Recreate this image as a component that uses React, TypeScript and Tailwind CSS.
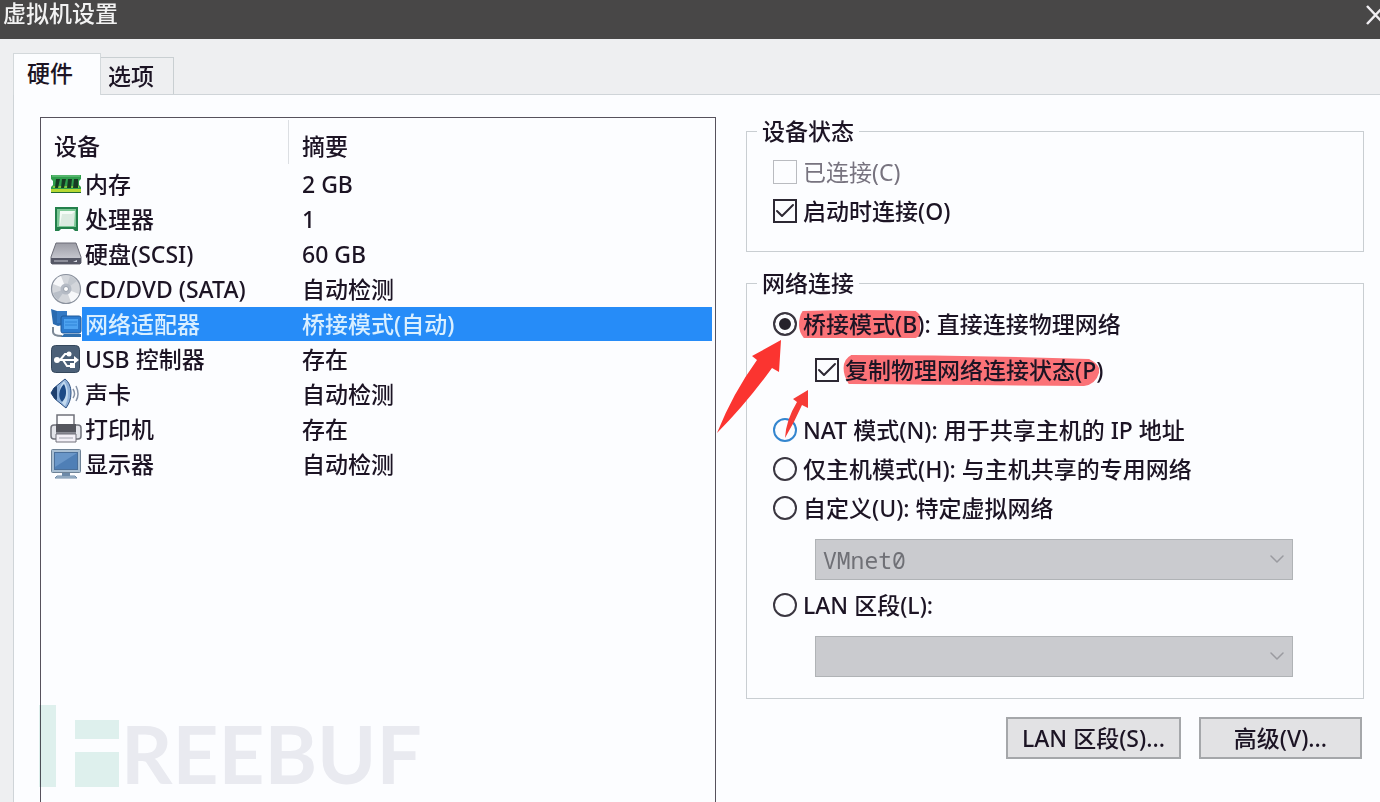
import { PropsWithChildren, ReactNode } from 'react';
import { Check, ChevronDown } from 'lucide-react';

const MemoryIcon = () => (
  <svg viewBox="0 0 32 32" className="size-8 shrink-0">
    <path d="M1 7h30v4l-2 2v4l2 2v6H1v-6l2-2v-4l-2-2z" fill="#2f9e4c" />
    <path d="M2 7h28v2H2z" fill="#55b56c" />
    <path d="M3 18h26v2H3z" fill="#7cc93f" />
    <path d="M1 21h30v3H1z" fill="#b5d832" />
    <path d="M6 11h4l-2 9H5zM12 11h4l-2 9h-3zM18 11h4l-1 9h-4zM24 11h4v9h-5z" fill="#173a22" />
    <path d="M1 24h30v1H1z" fill="#1f6a31" />
  </svg>
);

const CpuIcon = () => (
  <svg viewBox="0 0 32 32" className="size-8 shrink-0">
    <path d="M5 4h23v24h-3l-2-2H11l-2 2H5z" fill="#23804b" />
    <path d="M7 6h19v18H7z" fill="#7cc796" />
    <path d="M10 8h15l-1 15H9z" fill="#dcebe1" />
    <path d="M10 8h15l-3 3H12l-2 11z" fill="#f4fbf6" />
  </svg>
);

const DiskIcon = () => (
  <svg viewBox="0 0 32 32" className="size-8 shrink-0">
    <defs>
      <linearGradient id="disk" x1="0" y1="0" x2="0" y2="1">
        <stop offset="0" stopColor="#9b9ca5" />
        <stop offset="1" stopColor="#d5d6dd" />
      </linearGradient>
    </defs>
    <path d="M6 5h20l5 14v6l-1 1H2l-1-1v-6z" fill="url(#disk)" stroke="#6c6d78" />
    <path d="M1 20h30v5l-1 1H2l-1-1z" fill="#555765" />
    <path d="M4 23h14" stroke="#9fa1ad" strokeWidth="1.5" />
    <path d="M23 24l4-2v2z" fill="#d9dbe5" />
  </svg>
);

const DiscIcon = () => (
  <svg viewBox="0 0 32 32" className="size-8 shrink-0">
    <circle cx="16" cy="16" r="14.5" fill="#d3d6db" stroke="#8b929e" strokeWidth="1.2" />
    <path d="M16 16L3 11a14 14 0 0 1 8-8z" fill="#f7f8fa" />
    <path d="M16 16L29 21a14 14 0 0 1-8 8z" fill="#f7f8fa" />
    <path d="M16 16L8 27a14 14 0 0 1-5-7z" fill="#b9bfc8" />
    <path d="M16 16L20 3a14 14 0 0 1 7 5z" fill="#c3c8cf" />
    <circle cx="16" cy="16" r="5.5" fill="#b4bac4" />
    <circle cx="16" cy="16" r="2.5" fill="#fff" stroke="#98a0ac" />
  </svg>
);

const NetworkIcon = () => (
  <svg viewBox="0 0 32 32" className="size-8 shrink-0">
    <path d="M1 1l6 2h10v13l-9 2-5-2z" fill="#2a6ab0" />
    <path d="M7 3h10v12H7z" fill="#3479c4" />
    <path d="M3 19v5c0 3 3 4 9 4" fill="none" stroke="#7c8896" strokeWidth="2" />
    <rect x="11" y="8" width="20" height="17" rx="2" fill="#2c7bcf" stroke="#1f5a9c" />
    <rect x="14" y="11" width="14" height="10" fill="#4ea3f0" />
    <path d="M15 14h12M15 17h12" stroke="#2f84d8" />
    <path d="M14 26h17v3H11z" fill="#2f6fae" />
  </svg>
);

const UsbIcon = () => (
  <svg viewBox="0 0 32 32" className="size-8 shrink-0">
    <rect x="1.5" y="2.5" width="28" height="27" rx="4" fill="#4b6078" stroke="#34475c" />
    <g stroke="#fff" strokeWidth="2" fill="none">
      <path d="M7 17h18" />
      <path d="M10 17l5-6h4" />
      <path d="M13 17l4 6h4" />
    </g>
    <circle cx="7" cy="17" r="3" fill="#fff" />
    <circle cx="19" cy="11" r="2.5" fill="#fff" />
    <path d="M20 20h5v5h-5zM24 13l5 4-5 4z" fill="#fff" />
  </svg>
);

const SoundIcon = () => (
  <svg viewBox="0 0 32 32" className="size-8 shrink-0">
    <path d="M1 15l3-5L15 1c4 3 6 8 6 14s-2 11-5 15L5 21z" fill="#8fb0d8" stroke="#2b4f80" />
    <path d="M1 15l3-5 3-2v14l-3-2z" fill="#1f3f6d" />
    <path d="M14 3c5 7 5 17 1 25-6-4-8-18-1-25z" fill="#c3daf0" />
    <path d="M14 6c3 6 3 13-2 18-4-4-4-12 2-18z" fill="#1d4a86" />
    <path d="M23 11q3 5 0 9" fill="none" stroke="#8592a6" strokeWidth="1.5" />
    <path d="M26 8q4 8 0 15" fill="none" stroke="#8592a6" strokeWidth="1.5" />
  </svg>
);

const PrinterIcon = () => (
  <svg viewBox="0 0 32 32" className="size-8 shrink-0">
    <path d="M7 2h17v11H7z" fill="#fdfdff" stroke="#70717b" strokeWidth="1.5" />
    <rect x="1" y="12" width="30" height="14" rx="3" fill="#e3e4ea" stroke="#70717b" strokeWidth="1.5" />
    <path d="M6 11h20v8H6z" fill="#55565e" />
    <path d="M6 19h20v2H6z" fill="#8b8c95" />
    <path d="M6 21h20v8H6z" fill="#f3f0f7" stroke="#70717b" />
    <path d="M9 25h14" stroke="#a4a5b0" />
  </svg>
);

const DisplayIcon = () => (
  <svg viewBox="0 0 32 32" className="size-8 shrink-0">
    <rect x="1.5" y="1.5" width="29" height="23" rx="1" fill="#a9bfd3" stroke="#6d8296" />
    <rect x="4.5" y="4.5" width="23" height="17" fill="#4f7fb6" stroke="#4a6f9a" />
    <path d="M5 5h22L5 19z" fill="#6996c8" />
    <path d="M12 25h8v3h-8z" fill="#6d8aa8" />
    <path d="M7 28h18l2 2H5z" fill="#b4c6d6" stroke="#6d8aa8" />
  </svg>
);

interface Device {
  name: string;
  summary: string;
  icon: ReactNode;
  selected?: boolean;
}

const devices: Device[] = [
  { name: '内存', summary: '2 GB', icon: <MemoryIcon /> },
  { name: '处理器', summary: '1', icon: <CpuIcon /> },
  { name: '硬盘(SCSI)', summary: '60 GB', icon: <DiskIcon /> },
  { name: 'CD/DVD (SATA)', summary: '自动检测', icon: <DiscIcon /> },
  { name: '网络适配器', summary: '桥接模式(自动)', icon: <NetworkIcon />, selected: true },
  { name: 'USB 控制器', summary: '存在', icon: <UsbIcon /> },
  { name: '声卡', summary: '自动检测', icon: <SoundIcon /> },
  { name: '打印机', summary: '存在', icon: <PrinterIcon /> },
  { name: '显示器', summary: '自动检测', icon: <DisplayIcon /> },
];

interface ChoiceProps extends PropsWithChildren {
  className?: string;
  checked?: boolean;
  disabled?: boolean;
}

const CheckOption = ({ className = 'h-[39px]', checked, disabled, children }: ChoiceProps) => (
  <label className={`flex items-center gap-1.5 ${disabled ? 'font-normal text-[#77737f]' : ''} ${className}`}>
    <span className="grid size-6 shrink-0 place-items-center">
      <input
        type="checkbox"
        defaultChecked={checked}
        disabled={disabled}
        className="peer col-start-1 row-start-1 size-6 appearance-none border-2 border-[#2c2833] disabled:border disabled:border-[#b9bbc0]"
      />
      <Check
        strokeWidth={2}
        className="pointer-events-none invisible col-start-1 row-start-1 size-6 text-[#2c2833] peer-checked:visible"
      />
    </span>
    <span>{children}</span>
  </label>
);

const RadioOption = ({
  className = 'h-[39px]',
  ring = 'border-[#3a3640]',
  checked,
  children,
}: ChoiceProps & { ring?: string }) => (
  <label className={`flex items-center gap-1.5 ${className}`}>
    <input
      type="radio"
      name="network"
      defaultChecked={checked}
      className={`size-6 shrink-0 appearance-none rounded-full border-2 ${ring} checked:bg-[#26222b] checked:shadow-[inset_0_0_0_4px_#fcfdff]`}
    />
    <span>{children}</span>
  </label>
);

const Dropdown = ({ label, options, className = '' }: { label: string; options: string[]; className?: string }) => (
  <div className={`relative ml-[42px] mr-[70px] ${className}`}>
    <select
      disabled
      aria-label={label}
      className="block h-[41px] w-full appearance-none border border-[#b0b3b6] bg-[#cacbcf] px-[7px] font-['Noto_Sans_Mono','DejaVu_Sans_Mono',monospace] text-[23px] font-normal text-[#6f7076] opacity-100"
    >
      {options.map((o) => (
        <option key={o}>{o}</option>
      ))}
    </select>
    <ChevronDown strokeWidth={1.5} className="pointer-events-none absolute right-1 top-2 size-6 text-[#9a9ba0]" />
  </div>
);

const Group = ({ title, children }: PropsWithChildren<{ title: string }>) => (
  <fieldset className="relative min-w-0 border border-[#c9ced2] pb-[21px] pl-[26px]">
    <legend className="-ml-4 h-7 px-[5px] leading-7">{title}</legend>
    {children}
  </fieldset>
);

// hand-drawn marker stroke behind a piece of text
const Marker = ({ path, children }: PropsWithChildren<{ path: string }>) => (
  <span className="relative isolate">
    <svg
      viewBox="0 0 100 32"
      preserveAspectRatio="none"
      className="absolute -left-1 top-0 -z-10 h-8 w-full"
    >
      <path d={path} fill="#fb7277" />
    </svg>
    {children}
  </span>
);

const Arrows = () => (
  <svg viewBox="0 0 96 102" className="pointer-events-none absolute -left-[31px] top-[42px] h-[102px] w-24">
    <path d="M65 1L63 33L56 29Q30 65 1 94Q17 54 41 21L36 17Z" fill="#fb3430" />
    <path d="M92 51L92 69L86 66Q78 84 69 99Q70 81 81 63L77 60Z" fill="#f63b36" />
  </svg>
);

const Watermark = () => (
  <div className="pointer-events-none absolute bottom-0 left-[39px] flex items-end mix-blend-multiply">
    <svg viewBox="0 0 82 97" className="h-[97px] w-[82px]" fill="#e1f2ed">
      <path d="M0 0h17v82H0zM36 15h44v19H36zM36 47h44v35H36z" />
    </svg>
    <span className="font-['Lato',sans-serif] text-[80px] font-bold leading-[97px] text-[#ececf0]">REEBUF</span>
  </div>
);

const App = () => {
  return (
    <div className="relative flex min-h-screen flex-col overflow-hidden bg-[#eeeff1] font-['Noto_Sans','Noto_Sans_CJK_SC',sans-serif] text-[23px] font-medium leading-7 text-[#1c1424]">
      <header className="flex h-[39px] items-start justify-between bg-[#484747] pl-[3px] text-[#f2f2f2]">
        <h1 className="font-['Liberation_Sans','Noto_Sans_CJK_SC',sans-serif]">虚拟机设置</h1>
        <button type="button" aria-label="关闭" className="py-1">
          <svg viewBox="0 0 14 22" className="h-[22px] w-3.5">
            <path d="M1 2L18 20M18 2L1 20" stroke="#f0eef2" strokeWidth="2.5" />
          </svg>
        </button>
      </header>

      <div role="tablist" className="flex items-end pl-[13px] pt-3.5">
        <button
          type="button"
          role="tab"
          aria-selected="true"
          className="relative z-10 -mb-px h-[42px] border border-b-0 border-[#d3d8db] bg-[#fcfdff] pb-1 pl-[13px] pr-[27px]"
        >
          硬件
        </button>
        <button type="button" role="tab" aria-selected="false" className="h-[37px] border border-b-0 border-l-0 border-[#c9cfd2] pl-[7px] pr-[19px]">
          选项
        </button>
      </div>

      <main className="ml-[13px] grid grow grid-cols-[minmax(0,676fr)_minmax(0,618fr)] gap-[30px] border-l border-t border-[#cfd4d8] bg-[#fcfdff] pl-[26px] pr-4 pt-[22px]">
        <section className="border border-b-0 border-[#56525c] pr-[3px]">
          <table className="w-full table-fixed text-left">
            <thead>
              <tr className="h-12">
                <th className="w-[248px] p-0 font-medium">
                  <div className="border-r border-[#dcdfe3] pl-[13px] pt-2 leading-9">设备</div>
                </th>
                <th className="p-0 font-medium">
                  <div className="pl-[13px] pt-2 leading-9">摘要</div>
                </th>
              </tr>
            </thead>
            <tbody>
              {devices.map(({ name, summary, icon, selected }) => (
                <tr key={name} className={selected ? 'text-[#d9efff]' : ''}>
                  <td className="pl-[9px]">
                    <div className="flex h-[35px] items-center">
                      {icon}
                      <span className={`grow pl-[3px] leading-[34px] ${selected ? 'bg-[#268cf8]' : ''}`}>{name}</span>
                    </div>
                  </td>
                  <td>
                    <div className="flex h-[35px] items-center">
                      <span className={`grow pl-[13px] leading-[34px] ${selected ? 'bg-[#268cf8]' : ''}`}>{summary}</span>
                    </div>
                  </td>
                </tr>
              ))}
            </tbody>
          </table>
        </section>

        <section className="flex flex-col gap-[17px]">
          <Group title="设备状态">
            <div className="pt-[7px]">
              <CheckOption disabled>已连接(C)</CheckOption>
              <CheckOption checked>启动时连接(O)</CheckOption>
            </div>
          </Group>

          <Group title="网络连接">
            <div className="pt-1">
              <RadioOption checked className="h-[46px]">
                <Marker path="M3 3Q50 1 96 3Q102 8 102 16Q101 28 96 30Q50 30 4 30Q0 24 0 17Q0 8 3 3Z">桥接模式(B)</Marker>: 直接连接物理网络
              </RadioOption>
              <CheckOption checked className="ml-[42px] h-[46px]">
                <Marker path="M4 1Q50 1 96 5Q100 10 100 17Q99 30 94 32Q50 31 3 30Q1 22 1 14Q1 5 4 1Z">复制物理网络连接状态(P)</Marker>
              </CheckOption>
              <RadioOption className="mt-[17px] h-[39px]" ring="border-[#3486cf]">
                NAT 模式(N): 用于共享主机的 IP 地址
              </RadioOption>
              <RadioOption>仅主机模式(H): 与主机共享的专用网络</RadioOption>
              <RadioOption>自定义(U): 特定虚拟网络</RadioOption>
              <Dropdown label="特定虚拟网络" options={['VMnet0']} className="mb-[5px] mt-3" />
              <RadioOption>LAN 区段(L):</RadioOption>
              <Dropdown label="LAN 区段" options={['']} className="mt-3" />
            </div>
            <Arrows />
          </Group>

          <div className="flex justify-end gap-[18px] pr-0.5 pt-px">
            <button type="button" className="h-[42px] w-[175px] border-2 border-[#a5a7aa] bg-[#e2e2e4]">
              LAN 区段(S)...
            </button>
            <button type="button" className="h-[42px] w-[163px] border-2 border-[#a5a7aa] bg-[#e2e2e4]">
              高级(V)...
            </button>
          </div>
        </section>
      </main>

      <Watermark />
    </div>
  );
};

export default App;
